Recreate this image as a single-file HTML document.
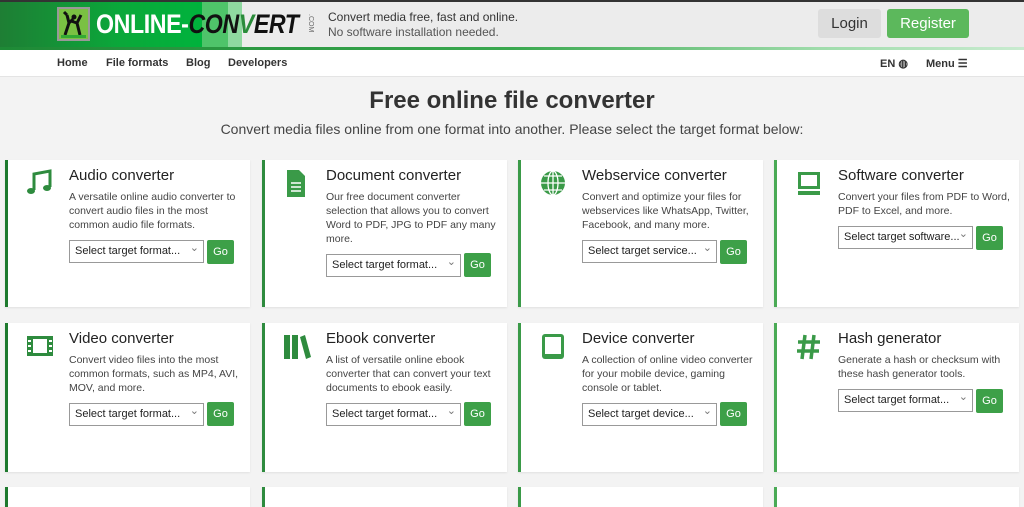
<!DOCTYPE html>
<html><head><style>
*{box-sizing:border-box;margin:0;padding:0}
body{width:1024px;height:497px;overflow:hidden;background:#f3f3f3;font-family:"Liberation Sans",sans-serif;color:#333;position:relative}
.top{position:absolute;left:0;top:0;width:1024px;height:49px;background:#ececec;border-top:2px solid #333}
.g1{position:absolute;left:0;top:0;width:202px;height:47px;background:linear-gradient(90deg,#1e7e34,#0aa83a 60%,#00b33c)}
.g2{position:absolute;left:202px;top:0;width:26px;height:47px;background:#4fc46a}
.g3{position:absolute;left:228px;top:0;width:14px;height:47px;background:#8fd9a0}
.line{position:absolute;left:0;top:47px;width:1024px;height:3px;background:linear-gradient(90deg,#1e8a36,#3aa84f 50%,#9fdcab 80%,#c9ebd0)}
.logo{position:absolute;left:57px;top:7px;width:33px;height:34px;background:#7ac143;border:2px solid #999}
.lt{position:absolute;left:96px;top:9px;font:bold 27px "Liberation Sans",sans-serif;color:#fff;letter-spacing:-0.5px;transform:scaleX(0.86);transform-origin:0 0;white-space:nowrap}
.lt i{color:#111;font-style:italic}
.lt b{color:#2a8c3a;font-style:italic}
.com{position:absolute;left:304px;top:14px;font-size:7px;color:#666;transform:rotate(90deg);transform-origin:0 0;left:314px}
.tag{position:absolute;left:328px;top:10px;font-size:12px;line-height:15px;color:#333}
.tag div:last-child{color:#555}
.btn{position:absolute;top:9px;height:29px;border-radius:3px;font-size:15px;line-height:29px;text-align:center}
.nav{position:absolute;left:0;top:50px;width:1024px;height:27px;background:#fff;border-bottom:1px solid #e4e4e4;font-size:11px;font-weight:bold;color:#333}
.nav span{position:absolute;top:7px}
h1{position:absolute;top:87px;width:1024px;text-align:center;font-size:24px;font-weight:bold;color:#333}
.sub{position:absolute;top:121px;width:1024px;text-align:center;font-size:14px;color:#444}
.card{position:absolute;width:245px;background:#fff;border-left:3px solid #2e8b3e;box-shadow:0 1px 2px rgba(0,0,0,.08)}
.card h2{position:absolute;left:61px;top:7px;font-size:15px;font-weight:normal;color:#222}
.card p{position:absolute;left:61px;top:30px;width:178px;font-size:10.5px;line-height:14px;color:#444}
.sel{position:absolute;left:61px;width:135px;height:23px;border:1px solid #999;font-size:11px;line-height:21px;padding-left:5px;color:#222;background:#fff}
.sel:after{content:"⌄";position:absolute;right:4px;top:-3px;color:#777;font-size:11px}
.go{position:absolute;left:199px;width:27px;height:24px;background:#3da048;color:#fff;font-size:11px;line-height:24px;text-align:center;border-radius:2px}
.ic{position:absolute;left:17px;top:8px;width:30px;height:30px}
</style></head><body>
<div class="top"><div class="g1"></div><div class="g2"></div><div class="g3"></div></div>
<div class="line"></div>
<div class="logo"><svg width="29" height="30" viewBox="0 0 29 30"><path d="M6 26 L10 14 L8 6 M14 10 L10 14 M12 12 L18 14 L21 26 M18 14 L22 6 M8 6 L5 3" stroke="#111" stroke-width="3" fill="none"/><circle cx="15" cy="8" r="2.5" fill="#111"/><rect x="2" y="26" width="25" height="3" fill="#3a3"/></svg></div>
<div class="lt">ONLINE-<i>CON</i><b>V</b><i>ERT</i></div>
<div class="com">.COM</div>
<div class="tag"><div>Convert media free, fast and online.</div><div>No software installation needed.</div></div>
<div class="btn" style="left:818px;width:63px;background:#ddd;color:#333">Login</div>
<div class="btn" style="left:887px;width:82px;background:#5cb85c;color:#fff">Register</div>
<div class="nav"><span style="left:57px">Home</span><span style="left:106px">File formats</span><span style="left:186px">Blog</span><span style="left:228px">Developers</span><span style="left:880px">EN ◍</span><span style="left:926px">Menu ☰</span></div>
<h1>Free online file converter</h1>
<div class="sub">Convert media files online from one format into another. Please select the target format below:</div>

<div class="card" style="left:5px;top:160px;height:147px;border-color:#1e7a2e"><svg class="ic" viewBox="0 0 30 30"><path d="M9 22 V6 L25 3 V19" stroke="#2e8b3e" stroke-width="3" fill="none"/><ellipse cx="6" cy="23" rx="4" ry="3" fill="#2e8b3e"/><ellipse cx="22" cy="20" rx="4" ry="3" fill="#2e8b3e"/></svg><h2>Audio converter</h2><p>A versatile online audio converter to convert audio files in the most common audio file formats.</p><div class="sel" style="top:80px">Select target format...</div><div class="go" style="top:80px">Go</div></div>
<div class="card" style="left:262px;top:160px;height:147px"><svg class="ic" viewBox="0 0 30 30"><path d="M5 2 H17 L23 8 V29 H5Z" fill="#3a9a48"/><path d="M9 15h10M9 19h10M9 23h10" stroke="#fff" stroke-width="1.5"/></svg><h2>Document converter</h2><p>Our free document converter selection that allows you to convert Word to PDF, JPG to PDF any many more.</p><div class="sel" style="top:94px">Select target format...</div><div class="go" style="top:93px">Go</div></div>
<div class="card" style="left:518px;top:160px;height:147px;border-color:#3a9a48"><svg class="ic" viewBox="0 0 30 30"><circle cx="15" cy="15" r="12" fill="#3a9a48"/><path d="M3 15h24M15 3v24M6 8h18M6 22h18" stroke="#fff" stroke-width="1.3"/><ellipse cx="15" cy="15" rx="5" ry="12" stroke="#fff" stroke-width="1.3" fill="none"/></svg><h2>Webservice converter</h2><p>Convert and optimize your files for webservices like WhatsApp, Twitter, Facebook, and many more.</p><div class="sel" style="top:80px">Select target service...</div><div class="go" style="top:80px">Go</div></div>
<div class="card" style="left:774px;top:160px;height:147px;border-color:#4aaa55"><svg class="ic" viewBox="0 0 30 30"><rect x="4" y="4" width="22" height="17" fill="#3a9a48"/><rect x="7" y="7" width="16" height="11" fill="#fff"/><rect x="4" y="23" width="22" height="4" fill="#3a9a48"/></svg><h2>Software converter</h2><p>Convert your files from PDF to Word, PDF to Excel, and more.</p><div class="sel" style="top:66px">Select target software...</div><div class="go" style="top:66px">Go</div></div>

<div class="card" style="left:5px;top:323px;height:149px;border-color:#1e7a2e"><svg class="ic" viewBox="0 0 30 30"><rect x="2" y="5" width="26" height="20" fill="#2e8b3e"/><rect x="8" y="8" width="14" height="14" fill="#fff"/><path d="M3 10h3M3 15h3M3 20h3M24 10h3M24 15h3M24 20h3" stroke="#fff" stroke-width="2"/></svg><h2>Video converter</h2><p>Convert video files into the most common formats, such as MP4, AVI, MOV, and more.</p><div class="sel" style="top:80px">Select target format...</div><div class="go" style="top:79px">Go</div></div>
<div class="card" style="left:262px;top:323px;height:149px"><svg class="ic" viewBox="0 0 30 30"><rect x="2" y="4" width="6" height="24" fill="#2e8b3e"/><rect x="10" y="4" width="6" height="24" fill="#2e8b3e"/><path d="M18 6 L23 4 L29 26 L24 28Z" fill="#2e8b3e"/></svg><h2>Ebook converter</h2><p>A list of versatile online ebook converter that can convert your text documents to ebook easily.</p><div class="sel" style="top:80px">Select target format...</div><div class="go" style="top:79px">Go</div></div>
<div class="card" style="left:518px;top:323px;height:149px;border-color:#3a9a48"><svg class="ic" viewBox="0 0 30 30"><rect x="4" y="3" width="22" height="25" rx="3" fill="#3a9a48"/><rect x="7" y="6" width="16" height="17" fill="#fff"/></svg><h2>Device converter</h2><p>A collection of online video converter for your mobile device, gaming console or tablet.</p><div class="sel" style="top:80px">Select target device...</div><div class="go" style="top:79px">Go</div></div>
<div class="card" style="left:774px;top:323px;height:149px;border-color:#4aaa55"><svg class="ic" viewBox="0 0 30 30"><path d="M11 4 L8 28 M20 4 L17 28 M4 11 H26 M3 20 H25" stroke="#3a9a48" stroke-width="3.5"/></svg><h2>Hash generator</h2><p>Generate a hash or checksum with these hash generator tools.</p><div class="sel" style="top:66px">Select target format...</div><div class="go" style="top:66px">Go</div></div>

<div class="card" style="left:5px;top:487px;height:20px;border-color:#1e7a2e"></div>
<div class="card" style="left:262px;top:487px;height:20px"></div>
<div class="card" style="left:518px;top:487px;height:20px;border-color:#3a9a48"></div>
<div class="card" style="left:774px;top:487px;height:20px;border-color:#4aaa55"></div>
</body></html>
